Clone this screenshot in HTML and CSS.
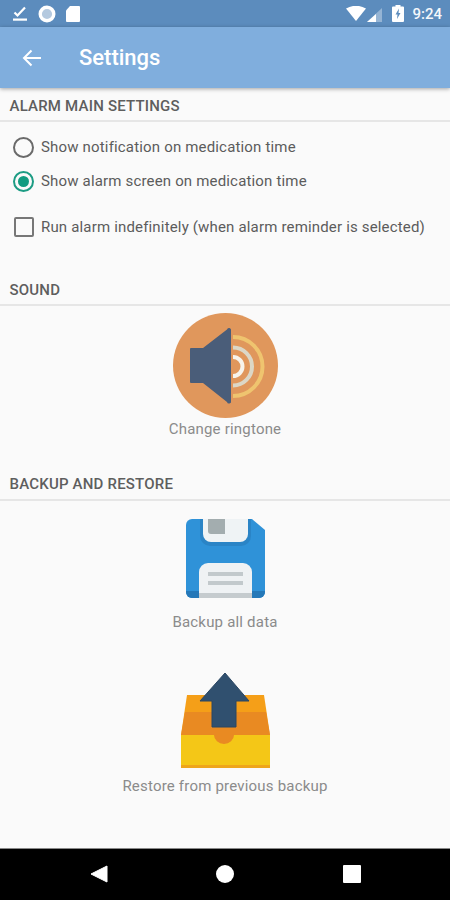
FILE: index.html
```html
<!DOCTYPE html>
<html lang="en">
<head>
<meta charset="utf-8">
<title>Settings</title>
<link rel="stylesheet" href="styles.css">
</head>
<body>
<div class="screen">
  <div class="statusbar">
    <div class="status-left">
      <svg class="ic-check" viewBox="0 0 14 15"><path d="M1.500 6.500l3 3 7.500-8" fill="none" stroke="#fff" stroke-width="2.200"/><rect x="0" y="12.500" width="14" height="2.200" fill="#fff"/></svg>
      <svg class="ic-circle" viewBox="0 0 18 18"><circle cx="9" cy="9" r="6.800" fill="#b4c9df" stroke="#fff" stroke-width="3.400"/></svg>
      <svg class="ic-sd" viewBox="0 0 14 16"><path d="M4 0h9a1 1 0 0 1 1 1v14a1 1 0 0 1-1 1H1a1 1 0 0 1-1-1V4.500z" fill="#fff"/></svg>
    </div>
    <div class="status-right">
      <svg class="ic-wifi" viewBox="0 0 20 15"><path d="M0 2.500Q10-3 20 2.500L10 15z" fill="#fff"/></svg>
      <svg class="ic-signal" viewBox="0 0 15 14"><path d="M15 0v14H0z" fill="#fff" fill-opacity=".35"/><path d="M9 6v8H0z" fill="#fff"/></svg>
      <svg class="ic-batt" viewBox="0 0 12 17"><path d="M3.500 0h5v1.500H11a1 1 0 0 1 1 1V16a1 1 0 0 1-1 1H1a1 1 0 0 1-1-1V2.500a1 1 0 0 1 1-1h2.500z" fill="#fff"/><path d="M7 3.500L3.500 9.500h2L5 14l3.500-6h-2z" fill="#5c8cbd"/></svg>
      <span class="clock">9:24</span>
    </div>
  </div>
  <header class="appbar">
    <svg class="ic-back" viewBox="0 0 20 18"><path d="M19 9H2M9.500 1.500L2 9l7.500 7.500" fill="none" stroke="#fff" stroke-width="2"/></svg>
    <h1 class="title">Settings</h1>
  </header>
  <main class="content">
    <h2 class="section first">ALARM MAIN SETTINGS</h2>
    <div class="options">
      <div class="option">
        <span class="radio"></span>
        <span class="option-text">Show notification on medication time</span>
      </div>
      <div class="option">
        <span class="radio on"><span class="radio-dot"></span></span>
        <span class="option-text">Show alarm screen on medication time</span>
      </div>
      <div class="option check-row">
        <span class="check"></span>
        <span class="option-text">Run alarm indefinitely (when alarm reminder is selected)</span>
      </div>
    </div>
    <h2 class="section sound">SOUND</h2>
    <div class="action action-sound">
      <svg class="art-speaker" viewBox="0 0 105 105">
        <circle cx="52.500" cy="52.500" r="52.500" fill="#e0975c"/>
        <g fill="none">
          <path d="M60 24A29.500 29.500 0 0 1 60 83" stroke="#efc46f" stroke-width="4"/>
          <path d="M60 34.500A19 19 0 0 1 60 72.500" stroke="#dcd7c6" stroke-width="4"/>
          <path d="M60 44A9.500 9.500 0 0 1 60 63" stroke="#f7f4ec" stroke-width="4"/>
        </g>
        <path d="M30 35L54 16.500a2 2 0 0 1 4 1V88a2 2 0 0 1-4 1L30 70H18a1 1 0 0 1-1-1V36a1 1 0 0 1 1-1z" fill="#4a5d79"/>
      </svg>
      <span class="action-label">Change ringtone</span>
    </div>
    <h2 class="section backup">BACKUP AND RESTORE</h2>
    <div class="action action-backup">
      <svg class="art-floppy" viewBox="0 0 79 79">
        <path d="M6 0H66L79 11V73a6 6 0 0 1-6 6H6a6 6 0 0 1-6-6V6a6 6 0 0 1 6-6z" fill="#2f92d8"/>
        <path d="M0 72v1a6 6 0 0 0 6 6H73a6 6 0 0 0 6-6v-1z" fill="#2578b8"/>
        <path d="M14 0H65V17a10 10 0 0 1-10 10H24a10 10 0 0 1-10-10z" fill="#2a84c6"/>
        <path d="M17 0H62V15a8 8 0 0 1-8 8H25a8 8 0 0 1-8-8z" fill="#eff3f5"/>
        <path d="M22 0H39V15H25a3 3 0 0 1-3-3z" fill="#a3adaf"/>
        <path d="M13 79V53a9 9 0 0 1 9-9H57a9 9 0 0 1 9 9V79z" fill="#eff2f4"/>
        <rect x="13" y="74" width="53" height="5" fill="#c5cbce"/>
        <rect x="22" y="53" width="35" height="4" fill="#c2c9cc"/>
        <rect x="22" y="62" width="35" height="4" fill="#c2c9cc"/>
      </svg>
      <span class="action-label">Backup all data</span>
    </div>
    <div class="action action-restore">
      <svg class="art-box" viewBox="0 0 89 96">
        <path d="M6 23H83L89 63V96H0V63z" fill="#f59f18"/>
        <path d="M4 40H85L89 63V93H0V63z" fill="#e98a22"/>
        <path d="M0 63H33a10 9 0 0 0 20 0H89V93H0z" fill="#f4c717"/>
        <rect x="0" y="93" width="89" height="3" fill="#eea51b"/>
        <path d="M44 1L68 29H55V55H31V29H19z" fill="#30506f" stroke="#2b4763" stroke-width="1"/>
      </svg>
      <span class="action-label">Restore from previous backup</span>
    </div>
  </main>
  <nav class="navbar">
    <svg class="nav-back" viewBox="0 0 18 18"><path d="M17 1V17L1 9z" fill="#fff" stroke="#fff" stroke-linejoin="round"/></svg>
    <span class="nav-home"></span>
    <span class="nav-recent"></span>
  </nav>
</div>
</body>
</html>
```
FILE: styles.css
```css
* { box-sizing: border-box; }
html, body { margin: 0; padding: 0; }
body { font-family: Roboto, "Liberation Sans", sans-serif; background: #fafafa; }
.screen { width: 450px; height: 900px; display: flex; flex-direction: column; overflow: hidden; }

.statusbar { height: 27px; flex: none; background: #5c8cbd; display: flex; justify-content: space-between; align-items: center; padding: 0 8px 0 13px; }
.status-left, .status-right { display: flex; align-items: center; }
.ic-check { width: 14px; height: 15px; }
.ic-circle { width: 18px; height: 18px; margin-left: 11px; }
.ic-sd { width: 14px; height: 16px; margin-left: 10px; }
.ic-wifi { width: 20px; height: 15px; }
.ic-signal { width: 15px; height: 14px; margin-left: 1px; margin-top: 2px; }
.ic-batt { width: 12px; height: 17px; margin-left: 10px; }
.clock { color: #f4f7fb; font-size: 15px; font-weight: 500; margin-left: 8px; }

.appbar { height: 61px; flex: none; background: #80aedd; display: flex; align-items: center; padding: 0 0 0 22px; box-shadow: 0 1px 4px rgba(0,0,0,.35); position: relative; }
.ic-back { width: 20px; height: 18px; }
.title { margin: 0 0 0 37px; font-size: 22px; font-weight: 500; color: #fff; }

.content { flex: 1; display: flex; flex-direction: column; }
.section { margin: 0; height: 34px; padding: 0 0 0 9.500px; display: flex; align-items: center; font-size: 15px; font-weight: 500; color: #5e5e5e; border-bottom: 2px solid #e6e6e6; letter-spacing: .2px; }
.section.first { padding-top: 4px; }
.section.sound { height: 31px; }
.section.backup { height: 33px; }

.options { height: 153px; padding: 8px 0 0 13px; display: flex; flex-direction: column; }
.option { height: 34px; display: flex; align-items: center; }
.check-row { margin-top: 12px; padding-left: 1px; }
.radio { width: 21px; height: 21px; border: 2px solid #6a6a6a; border-radius: 50%; display: flex; align-items: center; justify-content: center; flex: none; }
.radio.on { border-color: #1c9c84; }
.radio-dot { width: 11px; height: 11px; border-radius: 50%; background: #119b80; }
.check { width: 20px; height: 20px; border: 2px solid #777; border-radius: 2px; flex: none; }
.option-text { margin-left: 7px; font-size: 15px; letter-spacing: .17px; color: #5c5c5c; white-space: nowrap; }

.action { display: flex; flex-direction: column; align-items: center; }
.action-label { color: #8b8b8b; font-size: 15px; letter-spacing: .2px; }
.action-sound { height: 162px; padding-top: 7px; }
.art-speaker { width: 105px; height: 105px; }
.action-sound .action-label { margin-top: 2px; }
.action-backup { height: 145px; padding-top: 18px; }
.art-floppy { width: 79px; height: 79px; }
.action-backup .action-label { margin-top: 15px; }
.action-restore { padding-top: 26px; }
.art-box { width: 89px; height: 96px; }
.action-restore .action-label { margin-top: 9px; }

.navbar { height: 52px; flex: none; background: #000; border-top: 1px solid #888; position: relative; }
.nav-back { width: 18px; height: 18px; position: absolute; left: 90px; top: 16px; }
.nav-home { width: 18px; height: 18px; border-radius: 50%; background: #fff; position: absolute; left: 216px; top: 16px; }
.nav-recent { width: 18px; height: 18px; background: #fff; border-radius: 1px; position: absolute; left: 343px; top: 16px; }
```
